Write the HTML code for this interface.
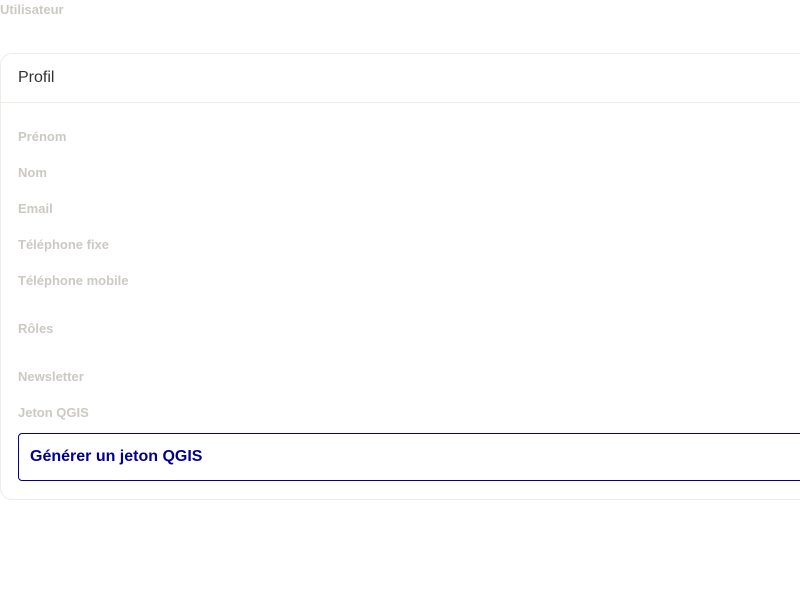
<!DOCTYPE html>
<html><head><meta charset="utf-8"><style>
body{margin:0;width:800px;height:600px;overflow:hidden;background:#fff;font-family:"Liberation Sans",sans-serif;}
.t{position:absolute;left:0;top:2px;font-size:13px;font-weight:bold;color:#ccc9c3;}
.card{position:absolute;left:0;top:53px;width:820px;height:447px;border:1px solid #eeece6;border-radius:12px;box-sizing:border-box;}
.hd{position:absolute;left:0;top:0;right:0;height:48px;border-bottom:1px solid #eeece6;}
.hd span{position:absolute;left:17px;top:15px;font-size:16px;color:#333;}
.l{position:absolute;left:17px;font-size:13px;font-weight:bold;color:#ccc9c3;}
.btn{position:absolute;left:17px;top:379px;width:820px;height:48px;border:1px solid #000091;border-radius:4px;box-sizing:border-box;}
.btn span{position:absolute;left:11px;top:14px;font-size:16px;font-weight:bold;color:#000091;}
</style></head><body>
<div class="t">Utilisateur</div>
<div class="card">
<div class="hd"><span>Profil</span></div>
<div class="l" style="top:75px">Prénom</div>
<div class="l" style="top:111px">Nom</div>
<div class="l" style="top:147px">Email</div>
<div class="l" style="top:183px">Téléphone fixe</div>
<div class="l" style="top:219px">Téléphone mobile</div>
<div class="l" style="top:267px">Rôles</div>
<div class="l" style="top:315px">Newsletter</div>
<div class="l" style="top:351px">Jeton QGIS</div>
<div class="btn"><span>Générer un jeton QGIS</span></div>
</div>
</body></html>
